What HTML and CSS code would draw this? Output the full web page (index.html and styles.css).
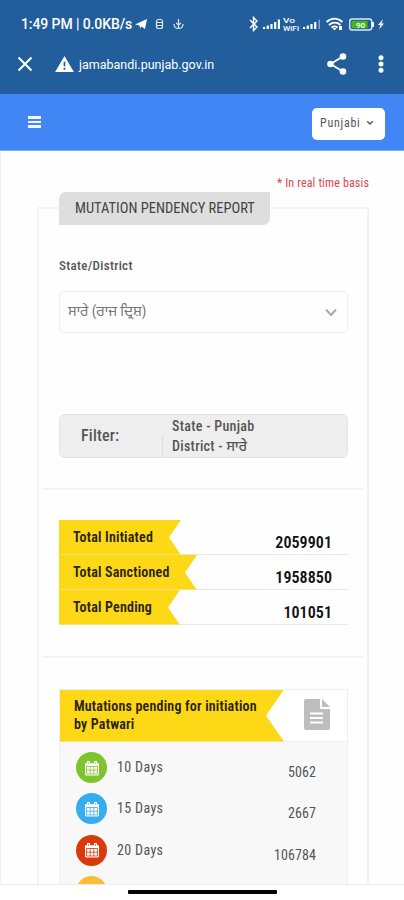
FILE: index.html
```
<!DOCTYPE html>
<html lang="en">
<head>
<meta charset="utf-8">
<title>Mutation Pendency Report</title>
<link rel="stylesheet" href="styles.css">
</head>
<body>
<svg width="0" height="0" class="defs">
  <symbol id="cal" viewBox="0 0 16 16"><path d="M1 3.2h14V14a1.5 1.5 0 0 1-1.5 1.5h-11A1.5 1.5 0 0 1 1 14z" fill="#fff"/><path d="M3 1h3v4H3zM10 1h3v4h-3z" fill="#fff"/><path d="M4.5 2v2M11.500 2v2" stroke="currentColor" stroke-width=".6"/><path d="M2.500 6.500h11v7.500h-11zM2.500 10.200h11M6.200 6.500V14M9.800 6.500V14" fill="none" stroke="currentColor" stroke-width=".8"/></symbol>
</svg>
<div class="phone">
  <div class="status">
    <span class="time">1:49 PM | 0.0KB/s</span>
    <svg class="st-left" width="52" height="16" viewBox="0 0 52 16">
      <path d="M1 8.500 13 3l-2 10-3.500-2.500L6 12.500 5.500 9.500z"/>
      <g fill="none" stroke="#dce8f5" stroke-width="1.200"><rect x="22.500" y="3.500" width="6" height="9" rx="2"/><path d="M23 6.500h5M23 9.500h5"/><path d="M44.500 3v9M42 7l2.500 2L47 7M40 8c0 3 2 4.500 4.500 4.500S49 11 49 8"/></g>
    </svg>
    <svg class="st-right" width="140" height="18" viewBox="0 0 140 18">
      <path d="M2 5l7 7-3.500 3.500v-13L9 6l-7 7" fill="none" stroke="#fff" stroke-width="1.400"/>
      <path d="M15 14v-2h2.200v2zM18.700 14v-3.500h2.200V14zM22.400 14V9h2.200v5zM26.100 14V7h2.200v7zM29.800 14V4.500H32V14z"/>
      <text x="35" y="8" font-size="8" textLength="12" lengthAdjust="spacingAndGlyphs">Vo</text><text x="35" y="15.500" font-size="8" textLength="16" lengthAdjust="spacingAndGlyphs">WiFi</text>
      <path d="M55 14v-2h2.200v2zM58.700 14v-3.500h2.200V14zM62.400 14V9h2.200v5zM66.100 14V7h2.200v7z"/><path d="M70.500 14V4.500h1.500V14z" opacity=".45"/>
      <g fill="none" stroke="#fff" stroke-width="1.900"><path d="M78.500 7c5-4.500 11-4.500 16 0M81 10c3.500-3 8-3 11.500 0M83.500 12.500c2-1.500 4-1.500 6 0"/></g><path d="M84.500 13h4l-2 2.500zM91 11h3v4h-3z"/>
      <rect x="101.700" y="4" width="22" height="11" rx="2.500" fill="none" stroke="#dce8f5" stroke-width="1.400"/><rect x="103.500" y="5.800" width="16" height="7.500" fill="#49b51d"/><text x="108" y="12.500" font-size="8">90</text><path d="M124 7h2v5h-2z"/>
      <path d="M135 4l-5 6h2.500l-1.500 4.500 5-6h-2.500z"/>
    </svg>
  </div>
  <div class="urlbar">
    <svg width="16" height="16" viewBox="0 0 16 16"><path d="M1.500 1.500l13 13M14.500 1.500l-13 13" stroke="#fff" stroke-width="2"/></svg>
    <svg class="warn" width="19" height="16" viewBox="0 0 20 17"><path d="M10 0 20 17H0z"/><path d="M10 6v5M10 12.500v2" stroke="#215e9b" stroke-width="1.800"/></svg>
    <span class="url">jamabandi.punjab.gov.in</span>
    <svg class="share" width="20" height="22" viewBox="0 0 20 22"><path d="M16 3.500 3.500 11 16 18.500" fill="none" stroke="#fff" stroke-width="2"/><circle cx="16" cy="3.500" r="3.300"/><circle cx="3.500" cy="11" r="3.300"/><circle cx="16" cy="18.500" r="3.300"/></svg>
    <svg class="dots" width="6" height="18" viewBox="0 0 6 18"><circle cx="3" cy="2.700" r="2.500"/><circle cx="3" cy="9" r="2.500"/><circle cx="3" cy="15.300" r="2.500"/></svg>
  </div>
  <header class="nav">
    <div class="burger"><i></i><i></i><i></i></div>
    <div class="lang"><span>Punjabi</span><svg width="8" height="6" viewBox="0 0 8 6"><path d="M1.200 1.200 4 4l2.800-2.800" fill="none" stroke="#555" stroke-width="1.400"/></svg></div>
  </header>
  <main>
    <p class="note">* In real time basis</p>
    <section class="frame">
      <h1>MUTATION PENDENCY REPORT</h1>
      <label>State/District</label>
      <div class="select"><span>ਸਾਰੇ (ਰਾਜ ਦ੍ਰਿਸ਼)</span><svg width="12" height="9" viewBox="0 0 12 9"><path d="M1 1.500 6 7l5-5.500" fill="none" stroke="#aaa" stroke-width="2"/></svg></div>
      <div class="filter"><div class="flabel">Filter:</div><div class="fvals"><p>State - Punjab</p><p class="district">District - ਸਾਰੇ</p></div></div>
      <hr>
      <div class="totals">
        <div class="row"><div class="flag w1"><span>Total Initiated</span></div><b>2059901</b></div>
        <div class="row"><div class="flag w2"><span>Total Sanctioned</span></div><b>1958850</b></div>
        <div class="row"><div class="flag w3"><span>Total Pending</span></div><b>101051</b></div>
      </div>
      <hr class="second">
      <div class="card">
        <div class="chead"><div class="banner"><p><span>Mutations pending for initiation</span></p><p><span>by Patwari</span></p></div>
          <svg width="26" height="31" viewBox="0 0 26 31"><path d="M0 2a2 2 0 0 1 2-2h14v10h10v19a2 2 0 0 1-2 2H2a2 2 0 0 1-2-2z" fill="#bdbdbd"/><path d="M18 0l8 8h-8z" fill="#bdbdbd"/><path d="M6 14.500h13M6 19h13M6 23.500h13" stroke="#fff" stroke-width="2"/></svg>
        </div>
        <div class="day"><div class="dot green"><svg width="16" height="16"><use href="#cal"/></svg></div><span class="dl">10 Days</span><span class="dn">5062</span></div>
        <div class="day"><div class="dot blue"><svg width="16" height="16"><use href="#cal"/></svg></div><span class="dl">15 Days</span><span class="dn">2667</span></div>
        <div class="day"><div class="dot red"><svg width="16" height="16"><use href="#cal"/></svg></div><span class="dl">20 Days</span><span class="dn">106784</span></div>
        <div class="day"><div class="dot amber"></div></div>
      </div>
    </section>
  </main>
  <footer><div class="pill"></div></footer>
</div>
</body>
</html>
```
FILE: styles.css
```
* { box-sizing: border-box; }
body { margin: 0; background: #fefefe; font-family: "Roboto Condensed", Roboto, "Noto Sans Gurmukhi", sans-serif; font-stretch: 75%; color: #555; }
p, h1 { margin: 0; }
svg { display: block; flex: none; fill: #fff; }
.defs { position: absolute; }
span, b { white-space: nowrap; }
.phone { width: 404px; height: 900px; overflow: hidden; display: flex; flex-direction: column; }
.status, .urlbar { background: #215e9b; color: #fff; display: flex; align-items: center; flex: none; font-family: Roboto, sans-serif; font-stretch: 100%; }
.status { height: 46px; padding: 1px 20px 0 21px; }
.time { font-size: 14px; font-weight: 500; width: 111px; letter-spacing: -.1px; }
.st-left { margin-left: 2px; }
.st-right { margin-left: auto; margin-right: -4px; font-weight: 500; }
.urlbar { height: 48px; padding: 0 20px 12px 17px; }
.warn { margin-left: 22px; }
.url { font-size: 12.500px; margin-left: 5px; padding-top: 1px; }
.share { margin-left: auto; }
.dots { margin-left: 31px; }
.nav { height: 57px; flex: none; background: #4285f4; border-bottom: 1px solid #7da9f5; padding: 2px 19px 0 28px; display: flex; align-items: center; justify-content: space-between; }
.burger { width: 13px; display: grid; gap: 2px; margin-top: -2px; }
.burger i { height: 2.500px; background: #f2f6ff; }
.lang { width: 73px; height: 32px; margin-top: 1px; border-radius: 5px; background: #fff; display: flex; align-items: center; justify-content: space-between; padding: 0 11px 2px 8px; font-size: 12px; letter-spacing: .75px; }
main { flex: 1; min-height: 0; overflow: hidden; border-left: 1px solid #f3f3f3; padding: 25px 35px 0 36px; }
.note { color: #dd4650; font-size: 12px; line-height: 14px; height: 31px; text-align: right; letter-spacing: .15px; }
.frame { height: 900px; border: 2px solid #f3f3f3; border-bottom: 0; padding: 0 19px 0 20px; }
h1 { width: 211px; height: 33px; margin-top: -17px; background: #dedede; border-radius: 7px 0 7px 0; padding-left: 16px; font-size: 14.500px; font-weight: 400; line-height: 34px; color: #444; }
label { display: block; margin-top: 33px; height: 16px; line-height: 16px; font-size: 13px; font-weight: 500; letter-spacing: .32px; }
.select { margin-top: 17px; height: 42px; border: 1px solid #f0f0f0; border-radius: 5px; display: flex; align-items: center; justify-content: space-between; padding: 1px 10px 0 8px; font-size: 14.500px; color: #777; }
.filter { margin-top: 81px; height: 44px; background: #eee; border: 1px solid #e5e5e5; border-radius: 6px; display: flex; }
.flabel { width: 102px; padding-left: 21px; line-height: 42px; font-size: 16px; font-weight: 500; letter-spacing: .2px; }
.fvals { font-size: 14px; font-weight: 500; line-height: 22px; letter-spacing: .3px; }
.fvals p { height: 21px; padding-left: 10px; }
.fvals .district { border-left: 1px solid #ddd; line-height: 20px; padding-left: 9px; }
hr { margin: 30px -15px 0 -16px; border: 0; height: 2px; background: #f3f3f3; }
.totals { margin-top: 30px; }
.row { height: 35px; border-bottom: 1px solid #e8e8e8; display: flex; justify-content: space-between; padding-right: 16px; color: #111; }
.flag { height: 35px; background: #fcd816; border-bottom: 1px solid #f6e27c; padding-left: 14px; line-height: 34px; font-size: 14px; font-weight: 600; letter-spacing: .2px; color: #29210b; clip-path: polygon(0 0, 100% 0, calc(100% - 12px) 50%, 100% 100%, 0 100%); }
.w1 { width: 122px; } .w2 { width: 138px; } .w3 { width: 121px; }
.row b { font-size: 16px; font-weight: 600; line-height: 45px; letter-spacing: .05px; }
hr.second { margin-top: 31px; }
.card { margin-top: 31px; border: 1px solid #eee; background: #f8f8f8; height: 260px; }
.chead { height: 52px; background: #fff; border-bottom: 1px solid #eee; display: flex; align-items: center; justify-content: space-between; padding-right: 17px; }
.chead > svg { margin-top: -2px; }
.banner { height: 52px; width: 224px; background: #fcd816; padding: 7px 0 0 14px; line-height: 18.500px; font-size: 14px; font-weight: 600; letter-spacing: .2px; color: #29210b; clip-path: polygon(0 0, 100% 0, calc(100% - 18px) 50%, 100% 100%, 0 100%); }
.day { height: 41.300px; display: flex; align-items: center; padding: 0 31px 0 16px; font-size: 14px; }
.chead + .day { margin-top: 5px; }
.dot { width: 31px; height: 31px; border-radius: 50%; display: grid; place-items: center; }
.green { background: #7fc42c; color: #7fc42c; } .blue { background: #35adef; color: #35adef; } .red { background: #d93a0c; color: #d93a0c; } .amber { background: #fdbc35; }
.dl { margin-left: 10px; padding-bottom: 1px; letter-spacing: .35px; }
.dn { margin-left: auto; padding-top: 9px; letter-spacing: .1px; }
footer { height: 16px; flex: none; background: #fff; border-top: 1px solid #eee; display: flex; justify-content: center; padding-top: 5px; }
.pill { width: 149px; height: 4px; background: #050505; border-radius: 1px; }
```
